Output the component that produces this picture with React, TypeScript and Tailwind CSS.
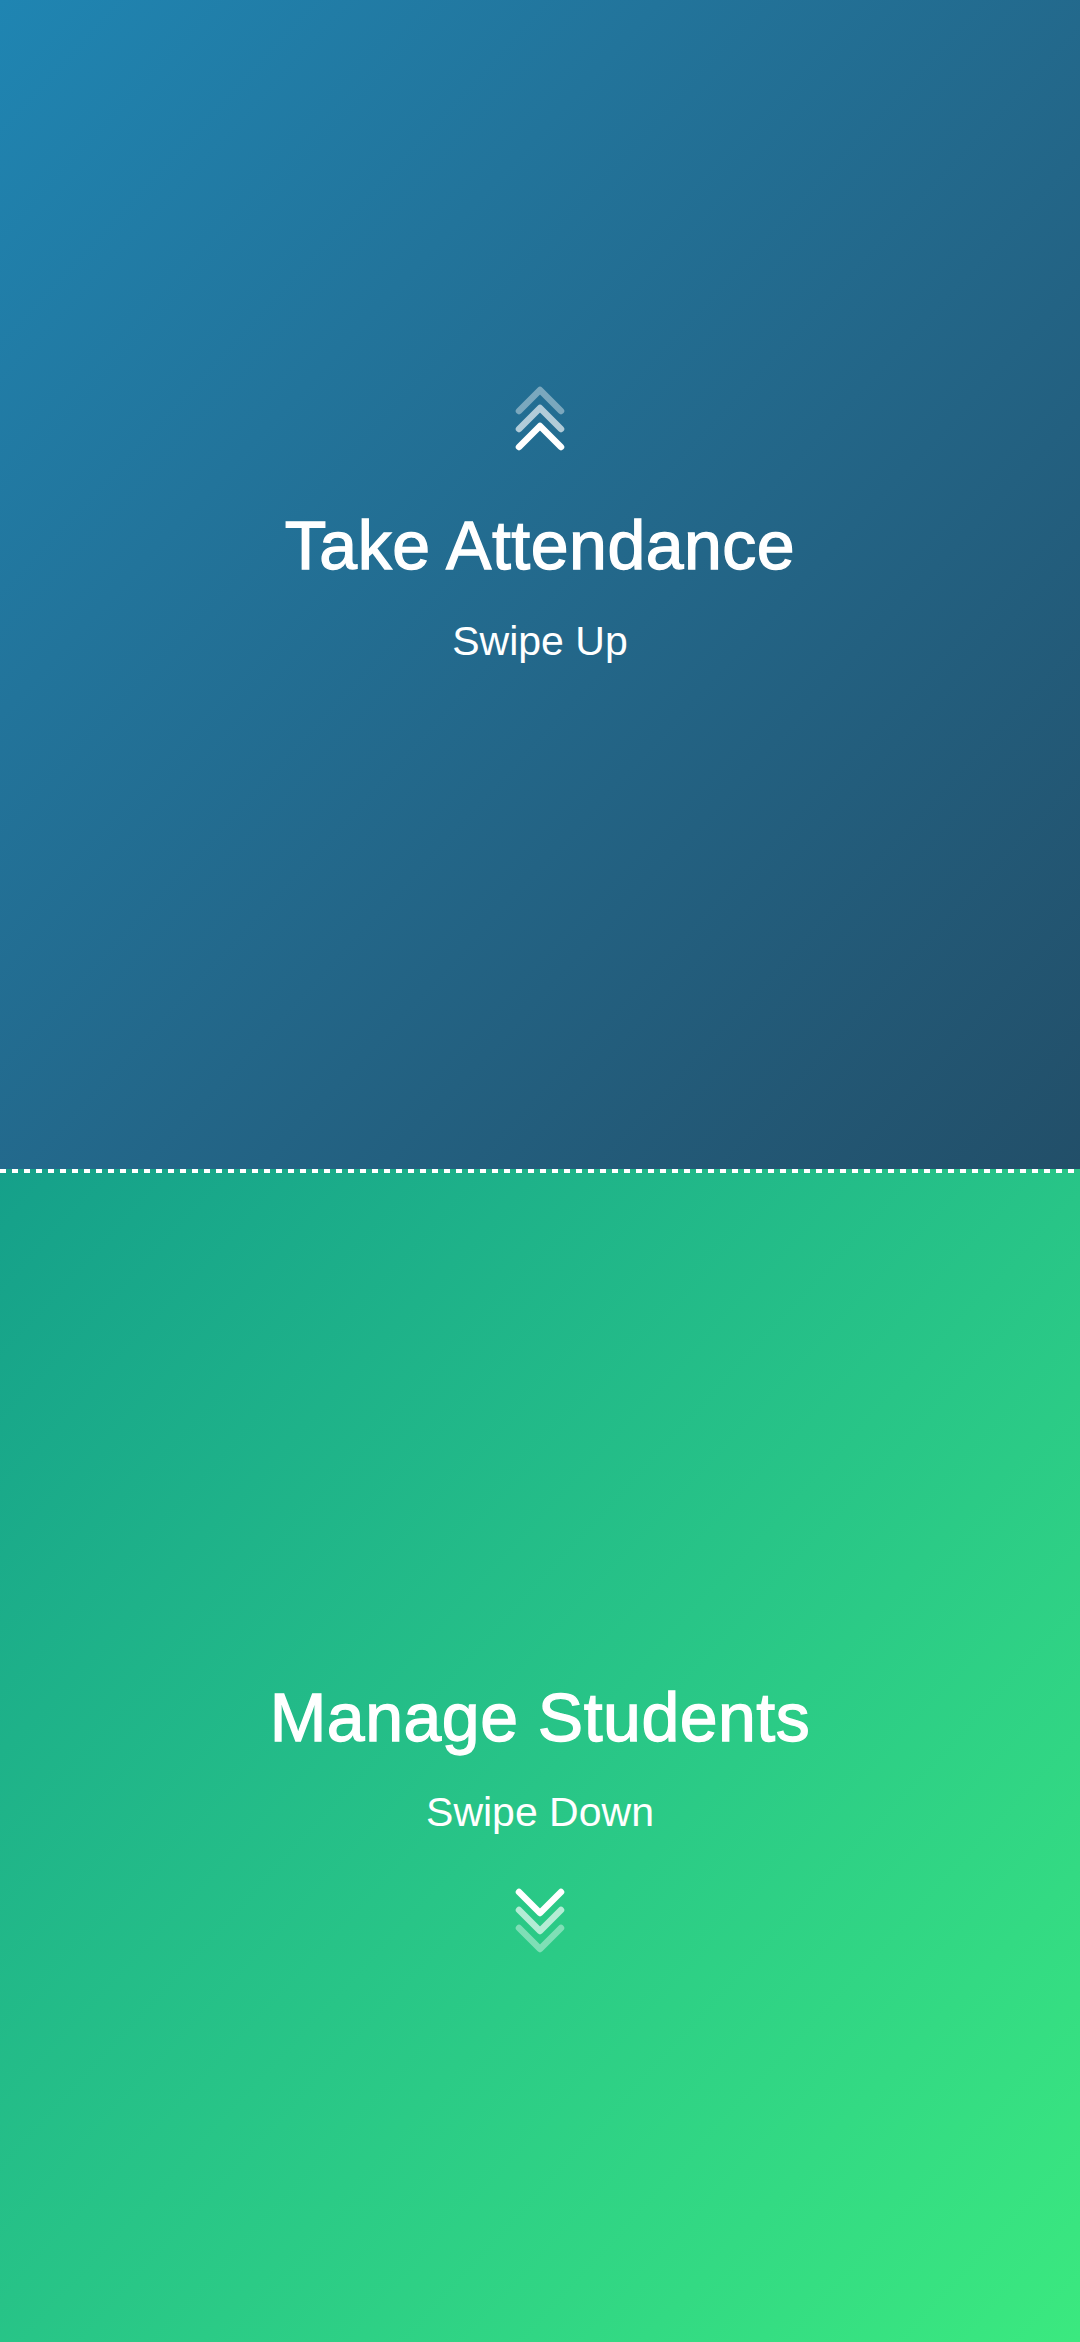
import React from "react";

function ChevronsUp() {
  return (
    <svg width="52" height="68" viewBox="0 0 52 68" fill="none" stroke="white" strokeWidth="6.5" strokeLinecap="round" strokeLinejoin="round">
      <polyline points="5,27 26,6 47,27" opacity="0.4" />
      <polyline points="5,45 26,24 47,45" opacity="0.65" />
      <polyline points="5,63 26,42 47,63" />
    </svg>
  );
}

function ChevronsDown() {
  return (
    <svg width="52" height="68" viewBox="0 0 52 68" fill="none" stroke="white" strokeWidth="6.5" strokeLinecap="round" strokeLinejoin="round">
      <polyline points="5,5 26,26 47,5" />
      <polyline points="5,23 26,44 47,23" opacity="0.65" />
      <polyline points="5,41 26,62 47,41" opacity="0.4" />
    </svg>
  );
}

const titleCls =
  "text-[68px] leading-none tracking-[0.5px] text-white [-webkit-text-stroke:1.3px_white] font-['Liberation_Sans',Arial,sans-serif]";
const subCls =
  "text-[41px] leading-none text-white font-['Liberation_Sans',Arial,sans-serif]";

export default function App() {
  return (
    <div className="w-[1080px] h-[2342px] flex flex-col overflow-hidden">
      <section className="h-[1169px] shrink-0 bg-linear-to-br from-[#1F85B2] to-[#224F69] flex flex-col items-center justify-center pt-[4px]">
        <ChevronsUp />
        <h1 className={"mt-[59px] " + titleCls}>Take Attendance</h1>
        <p className={"mt-[42px] " + subCls}>Swipe Up</p>
        <div className="h-[127px]" />
      </section>
      <section className="h-[1173px] shrink-0 bg-linear-to-br from-[#15A08A] to-[#3BE97F] flex flex-col">
        <div className="h-[4px] w-full bg-[repeating-linear-gradient(90deg,#ffffff_0px,#ffffff_6px,transparent_6px,transparent_12px)]" />
        <div className="flex-1 flex flex-col items-center justify-center">
          <div className="h-[122px]" />
          <h1 className={titleCls}>Manage Students</h1>
          <p className={"mt-[41px] " + subCls}>Swipe Down</p>
          <div className="mt-[54px]">
            <ChevronsDown />
          </div>
        </div>
      </section>
    </div>
  );
}
